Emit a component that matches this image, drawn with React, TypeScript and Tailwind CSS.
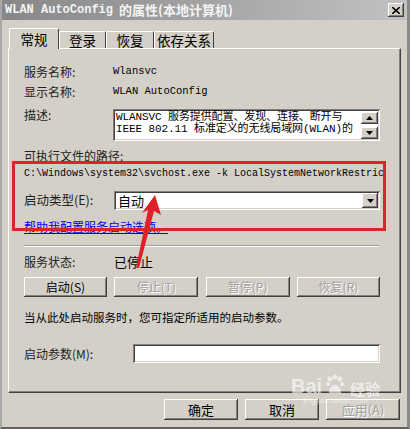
import React from "react";

const cjk = "font-['Noto_Sans_CJK_SC',sans-serif]";
const mono = "font-['Liberation_Mono','Noto_Sans_CJK_SC',monospace]";
const raised =
  "shadow-[inset_-1px_-1px_#404040,inset_1px_1px_#ffffff,inset_-2px_-2px_#808080,inset_2px_2px_#d4d0c8]";
const sunken =
  "shadow-[inset_1px_1px_#808080,inset_-1px_-1px_#ffffff,inset_2px_2px_#404040,inset_-2px_-2px_#d4d0c8]";

const Btn = ({
  label,
  disabled,
  className,
}: {
  label: string;
  disabled?: boolean;
  className: string;
}) => (
  <div
    className={`flex items-center justify-center bg-[#d4d0c8] text-[12px] leading-none ${raised} ${className} ${
      disabled ? "text-[#a0a0a0] [text-shadow:1px_1px_#ffffff]" : "text-black"
    }`}
  >
    {label}
  </div>
);

const Tab = ({ label, active, width }: { label: string; active?: boolean; width: string }) => (
  <div
    className={
      active
        ? `relative z-10 -mb-px flex h-[21px] items-center justify-center rounded-t-[2px] border-l border-t border-r border-l-white border-t-white border-r-[#404040] bg-[#d4d0c8] text-[13.5px] ${width}`
        : `flex h-[17px] items-center justify-center rounded-t-[2px] border-l border-t border-r border-l-white border-t-white border-r-[#404040] bg-[#d4d0c8] text-[13.5px] ${width}`
    }
  >
    {label}
  </div>
);

const Arrow = ({ down }: { down?: boolean }) => (
  <svg width="7" height="4" viewBox="0 0 7 4">
    <path d={down ? "M0 0h7L3.5 4z" : "M0 4h7L3.5 0z"} fill="#000" />
  </svg>
);

export default function App() {
  return (
    <div className={`relative h-[429px] w-[410px] overflow-hidden ${cjk}`}>
      <div className="flex h-[429px] w-[410px] flex-col border-b-2 border-l-2 border-r-[3px] border-b-[#606060] border-l-[#a8a8a8] border-r-[#8a8a8a] bg-[#d4d0c8] text-black">
        {/* title bar */}
        <div className="flex h-[20px] shrink-0 items-center justify-between bg-linear-to-r from-[#878787] to-[#c2c2c2] pl-[3px] pr-[3px]">
          <div className="flex items-center text-[#f4f4f4]">
            <span className={`${mono} text-[12px] font-bold`}>WLAN AutoConfig</span>
            <span className="ml-[6px] text-[13px] font-bold">的属性(本地计算机)</span>
          </div>
          <div className={`flex h-[14px] w-[16px] items-center justify-center bg-[#d4d0c8] ${raised}`}>
            <svg width="8" height="7" viewBox="0 0 8 7">
              <path d="M0 0l8 7M8 0L0 7" stroke="#000" strokeWidth="1.6" />
            </svg>
          </div>
        </div>

        {/* tabs */}
        <div className="ml-[7px] mt-[7px] flex h-[21px] items-end">
          <Tab label="常规" active width="w-[50px]" />
          <Tab label="登录" width="w-[47px]" />
          <Tab label="恢复" width="w-[48px]" />
          <Tab label="依存关系" width="w-[60px]" />
        </div>

        {/* panel */}
        <div className="ml-[6px] flex h-[345px] w-[393px] flex-col border border-b-[#404040] border-l-white border-r-[#404040] border-t-white pl-[15px] shadow-[inset_-1px_-1px_#808080]">
          <div className="mt-[13px] flex h-[20px] items-center">
            <div className="w-[89px] text-[12px] text-[#222]">服务名称:</div>
            <div className={`${mono} text-[10.5px]`}>Wlansvc</div>
          </div>
          <div className="flex h-[20px] items-center">
            <div className="w-[89px] text-[12px] text-[#222]">显示名称:</div>
            <div className={`${mono} text-[10.5px]`}>WLAN AutoConfig</div>
          </div>
          <div className="mt-[7px] flex h-[32px] items-start">
            <div className="mt-[-1px] w-[89px] text-[12px] leading-[14px] text-[#222]">描述:</div>
            <div className={`relative flex h-[32px] w-[267px] bg-white ${sunken}`}>
              <div className={`${mono} pl-[3px] pt-[2px] text-[11px] leading-[12px] tracking-[-0.1px]`}>
                <div>WLANSVC 服务提供配置、发现、连接、断开与</div>
                <div>IEEE 802.11 标准定义的无线局域网(WLAN)的</div>
              </div>
              <div className="absolute right-[2px] top-[3px] flex flex-col gap-[3px]">
                <div className={`flex h-[12px] w-[17px] items-center justify-center bg-[#d4d0c8] ${raised}`}>
                  <Arrow />
                </div>
                <div className={`flex h-[12px] w-[17px] items-center justify-center bg-[#d4d0c8] ${raised}`}>
                  <Arrow down />
                </div>
              </div>
            </div>
          </div>

          <div className="mt-[8px] h-[14px] text-[12px] leading-[14px] text-[#222]">可执行文件的路径:</div>
          <div className={`mt-[4px] h-[14px] whitespace-nowrap ${mono} text-[10px] leading-[14px]`}>
            C:\Windows\system32\svchost.exe -k LocalSystemNetworkRestric
          </div>

          <div className="mt-[10px] flex h-[19px] items-center">
            <div className="w-[90px] text-[12.5px] text-[#222]">启动类型(E):</div>
            <div className={`flex h-[19px] w-[266px] items-center justify-between bg-white pl-[4px] pr-[2px] ${sunken}`}>
              <span className="text-[13px] leading-none">自动</span>
              <div className={`flex h-[15px] w-[16px] items-center justify-center bg-[#d4d0c8] ${raised}`}>
                <Arrow down />
              </div>
            </div>
          </div>

          <div className="mt-[10px] h-[14px] text-[12px] leading-[14px] text-[#0000ee] underline">
            帮助我配置服务启动选项。
          </div>

          <div className="mt-[11px] h-[2px] w-[355px] border-b border-t border-b-white border-t-[#9a9a9a]" />

          <div className="mt-[8px] flex h-[14px] items-center">
            <div className="w-[90px] text-[12px] text-[#222]">服务状态:</div>
            <div className="text-[13px]">已停止</div>
          </div>

          <div className="mt-[8px] flex h-[20px] w-[356px] justify-between">
            <Btn label="启动(S)" className="h-[20px] w-[83px]" />
            <Btn label="停止(T)" disabled className="h-[20px] w-[84px]" />
            <Btn label="暂停(P)" disabled className="h-[20px] w-[84px]" />
            <Btn label="恢复(R)" disabled className="h-[20px] w-[83px]" />
          </div>

          <div className="mt-[13px] h-[14px] whitespace-nowrap text-[11.5px] leading-[14px]">
            当从此处启动服务时，您可指定所适用的启动参数。
          </div>

          <div className="mt-[20px] flex h-[19px] items-center">
            <div className="w-[109px] text-[12px] text-[#222]">启动参数(M):</div>
            <div className={`h-[19px] w-[247px] bg-white ${sunken}`} />
          </div>
        </div>

        {/* dialog buttons */}
        <div className="mt-[6px] flex justify-end gap-[7px] pr-[7px]">
          <Btn label="确定" className="h-[21px] w-[74px] text-[13px]" />
          <Btn label="取消" className="h-[21px] w-[74px] text-[13px]" />
          <Btn label="应用(A)" disabled className="h-[21px] w-[74px] text-[13px]" />
        </div>
      </div>

      {/* red annotation box */}
      <div className="pointer-events-none absolute left-[12px] top-[161px] h-[70px] w-[374px] border-[3px] border-[#d8262b]" />

      {/* red arrow */}
      <svg className="pointer-events-none absolute left-0 top-0" width="410" height="429" viewBox="0 0 410 429">
        <polygon
          points="155,195 161,215 154,211 139,268 136,268 148,210 142,213"
          fill="#e02027"
        />
      </svg>

      {/* watermark */}
      <div className="pointer-events-none absolute left-[291px] top-[374px] flex flex-col items-center text-white opacity-60">
        <div className="flex items-end gap-[2px]">
          <span className="font-['Liberation_Sans',sans-serif] text-[20px] font-bold leading-none">Bai</span>
          <svg width="22" height="22" viewBox="0 0 22 22">
            <circle cx="6" cy="5" r="2.5" fill="#fff" />
            <circle cx="11" cy="3" r="2.5" fill="#fff" />
            <circle cx="16" cy="5" r="2.5" fill="#fff" />
            <circle cx="4" cy="10" r="2" fill="#fff" />
            <circle cx="18" cy="10" r="2" fill="#fff" />
            <path d="M5 19c0-5 3-8 6-8s6 3 6 8z" fill="#fff" />
          </svg>
          <span className="ml-[2px] text-[15px] font-bold leading-none">经验</span>
        </div>
        <span className="font-['Liberation_Sans',sans-serif] text-[8px] leading-[10px]">jingyan.baidu.com</span>
      </div>
    </div>
  );
}
